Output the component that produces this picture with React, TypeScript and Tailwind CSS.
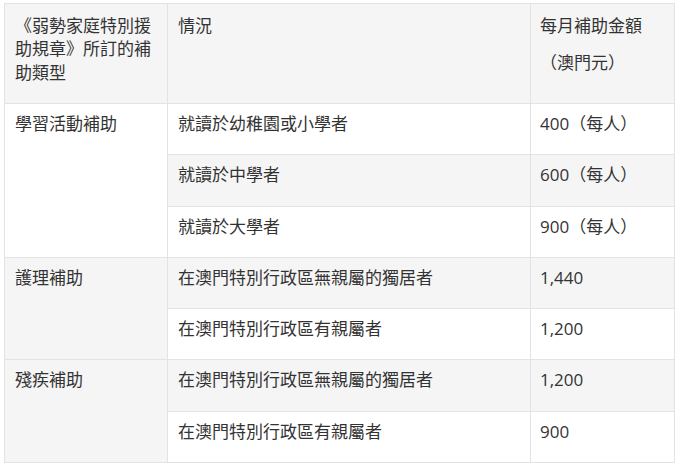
const rows = [
  { group: "學習活動補助", span: 3, desc: "就讀於幼稚園或小學者", amount: "400（每人）" },
  { desc: "就讀於中學者", amount: "600（每人）" },
  { desc: "就讀於大學者", amount: "900（每人）" },
  { group: "護理補助", span: 2, desc: "在澳門特別行政區無親屬的獨居者", amount: "1,440" },
  { desc: "在澳門特別行政區有親屬者", amount: "1,200" },
  { group: "殘疾補助", span: 2, desc: "在澳門特別行政區無親屬的獨居者", amount: "1,200" },
  { desc: "在澳門特別行政區有親屬者", amount: "900" },
];

export default function App() {
  return (
    <div
      className="w-[680px] h-[466px] bg-white pt-[3px] pl-[4px] text-[17px] text-[#333]"
      style={{ fontFamily: '"Open Sans", "Noto Sans CJK TC", sans-serif' }}
    >
      <table className="w-[670px] border-collapse table-fixed">
        <colgroup>
          <col className="w-[163px]" />
          <col className="w-[363px]" />
          <col className="w-[144px]" />
        </colgroup>
        <thead>
          <tr className="bg-[#f5f5f5] align-top">
            <th className="border border-[#e3e3e3] pl-[10px] pr-2 pt-[10px] pb-[19px] text-left font-normal leading-[23.3px] h-[100px]">
              《弱勢家庭特別援助規章》所訂的補助類型
            </th>
            <th className="border border-[#e3e3e3] pl-[10px] pt-[10px] text-left font-normal leading-[23.3px]">
              情況
            </th>
            <th className="border border-[#e3e3e3] pl-[9px] pt-[10px] text-left font-normal leading-[23.3px]">
              <p>每月補助金額</p>
              <p className="mt-[13.4px]">（澳門元）</p>
            </th>
          </tr>
        </thead>
        <tbody>
          {rows.map((row, i) => (
            <tr key={i} className={i % 2 === 1 ? "bg-[#f5f5f5] align-top" : "bg-white align-top"}>
              {row.group && (
                <td
                  rowSpan={row.span}
                  className="border border-[#e3e3e3] pl-[10px] pt-2 leading-[23px]"
                >
                  {row.group}
                </td>
              )}
              <td className="border border-[#e3e3e3] pl-[10px] pt-2 pb-[19.3px] leading-[23px]">
                {row.desc}
              </td>
              <td className="border border-[#e3e3e3] pl-[9px] pt-2 pb-[19.3px] leading-[23px]">
                {row.amount}
              </td>
            </tr>
          ))}
        </tbody>
      </table>
    </div>
  );
}
